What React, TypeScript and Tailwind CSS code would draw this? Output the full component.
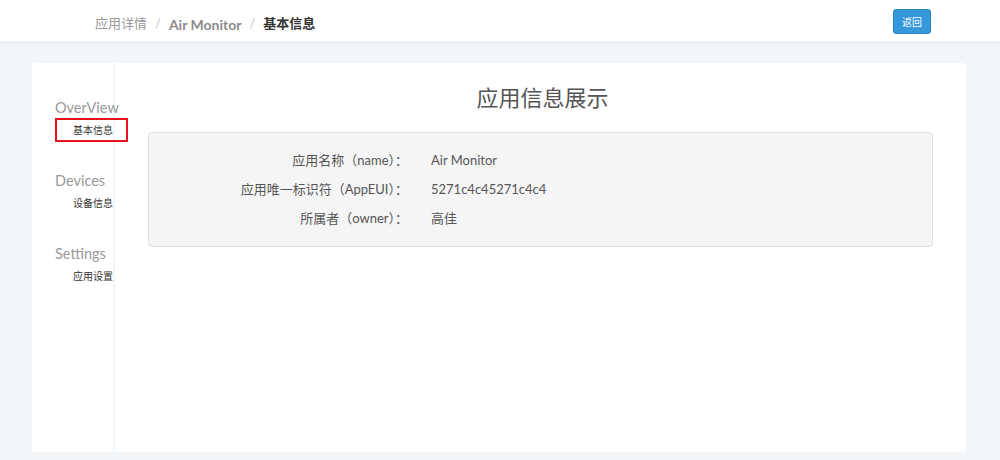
const font = { fontFamily: 'Lato, "Noto Sans CJK SC", sans-serif' };

const groups = [
  { title: "OverView", item: "基本信息", active: true },
  { title: "Devices", item: "设备信息", active: false },
  { title: "Settings", item: "应用设置", active: false },
];

const rows = [
  { label: "应用名称（name）：", value: "Air Monitor" },
  { label: "应用唯一标识符（AppEUI）：", value: "5271c4c45271c4c4" },
  { label: "所属者（owner）：", value: "高佳" },
];

const Header = () => (
  <header className="h-[43px] bg-white border-b border-[#e4e9ee] flex items-center justify-between pl-[95px] pr-[69px]">
    <div className="flex items-center text-[13px] gap-x-[8px] pt-[6px]">
      <span className="text-[#9a9a9a]">应用详情</span>
      <span className="text-[#c4c4c4]">/</span>
      <span className="text-[#8a8a8a] font-bold text-[14px]">Air Monitor</span>
      <span className="text-[#c4c4c4]">/</span>
      <span className="text-[#333] font-bold">基本信息</span>
    </div>
    <button className="w-[38px] h-[25px] rounded-[3px] bg-[#3498db] border border-[#2a86c4] text-white text-[10px] leading-none mt-[1px]">
      返回
    </button>
  </header>
);

const Sidebar = () => (
  <aside className="relative z-10 w-[81px] shrink-0 bg-white rounded-l-[4px] pt-[35px] pl-[23px] flex flex-col gap-y-[29px] overflow-visible">
    {groups.map((g) => (
      <div key={g.title} className="flex flex-col">
        <div className="h-[20px] leading-[20px] text-[14.5px] text-[#999] whitespace-nowrap">{g.title}</div>
        <div
          className={`w-[73px] h-[24px] flex items-center pl-[16px] text-[10px] text-[#333] whitespace-nowrap ${
            g.active ? "border-2 border-[#e5141b]" : "border-2 border-transparent"
          }`}
        >
          {g.item}
        </div>
      </div>
    ))}
  </aside>
);

const Main = () => (
  <main className="flex-1 bg-white rounded-r-[4px] pt-[20px] px-[33px]">
    <h2 className="text-center text-[22px] leading-[30px] text-[#555] mb-[19px] pl-[4px]">应用信息展示</h2>
    <div className="bg-[#f5f5f5] border border-[#e1e1e1] rounded-[4px] h-[115px] pt-[13px] grid grid-cols-[259px_1fr] gap-x-[23px] content-start">
      {rows.map((r) => (
        <div key={r.label} className="contents">
          <div className="text-right text-[13px] leading-[29px] text-[#555]">{r.label}</div>
          <div className="text-[13px] leading-[29px] text-[#555]">{r.value}</div>
        </div>
      ))}
    </div>
  </main>
);

export default function App() {
  return (
    <div className="w-[1000px] h-[460px] bg-[#f3f6f9] overflow-hidden" style={font}>
      <Header />
      <div className="mt-[20px] ml-[32px] mr-[34px] h-[389px] flex gap-x-[2px]">
        <Sidebar />
        <Main />
      </div>
    </div>
  );
}
